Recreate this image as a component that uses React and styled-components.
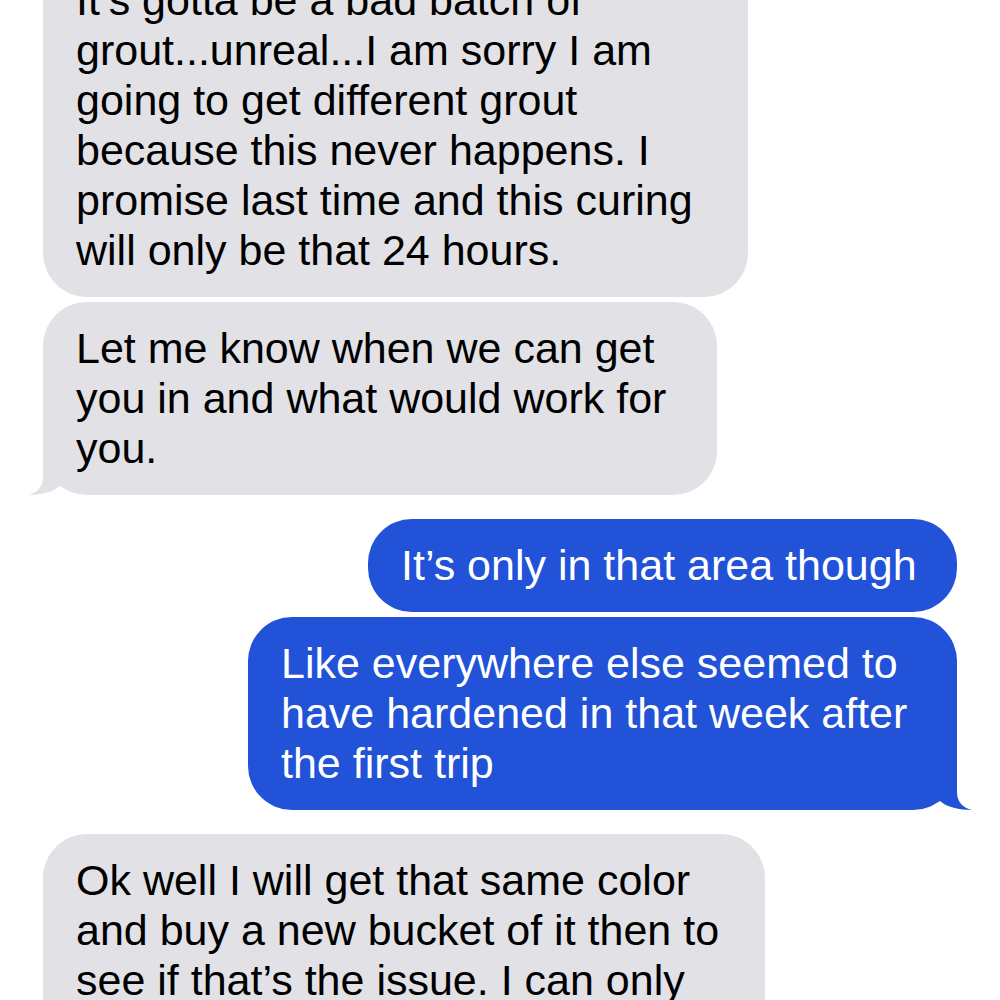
import styled, { createGlobalStyle } from 'styled-components'

const GlobalStyle = createGlobalStyle`
  html, body {
    margin: 0;
    padding: 0;
    background: #ffffff;
    height: 1000px;
    overflow: hidden;
  }
`

const GRAY = '#e1e1e6'
const BLUE = '#2152d8'

const Thread = styled.div`
  display: flex;
  flex-direction: column;
  gap: 24px;
  margin-top: -46px;
  padding: 0 43px;
  font-family: "Liberation Sans", Arial, sans-serif;
`

const Group = styled.div`
  display: flex;
  flex-direction: column;
  align-items: ${p => (p.$mine ? 'flex-end' : 'flex-start')};
  gap: 5px;
`

const Bubble = styled.div`
  position: relative;
  box-sizing: border-box;
  width: ${p => p.$w}px;
  padding: 21px 33px 22px;
  border-radius: 44px;
  background: ${p => (p.$mine ? BLUE : GRAY)};
  color: ${p => (p.$mine ? '#ffffff' : '#000000')};
  font-size: 43px;
  line-height: 50px;
  white-space: nowrap;
`

const TailSvg = styled.svg`
  position: absolute;
  bottom: 0;
  width: 34px;
  height: 44px;
  ${p => (p.$mine ? 'right: -15px;' : 'left: -15px; transform: scaleX(-1);')}
`

function Tail({ mine }) {
  return (
    <TailSvg $mine={mine} viewBox="0 0 34 44">
      <path
        d="M0 0 L19 0 L19 26 C19 36 25 42 34 44 C22 44 8 41 2 35 L0 36 Z"
        fill={mine ? BLUE : GRAY}
      />
    </TailSvg>
  )
}

function Lines({ lines }) {
  return lines.map((l, i) => (
    <span key={i}>
      {l}
      {i < lines.length - 1 && <br />}
    </span>
  ))
}

const messages = [
  {
    mine: false,
    items: [
      {
        w: 705,
        lines: [
          'It’s gotta be a bad batch of',
          'grout...unreal...I am sorry I am',
          'going to get different grout',
          'because this never happens. I',
          'promise last time and this curing',
          'will only be that 24 hours.',
        ],
      },
      {
        w: 674,
        tail: true,
        lines: ['Let me know when we can get', 'you in and what would work for', 'you.'],
      },
    ],
  },
  {
    mine: true,
    items: [
      { w: 589, lines: ['It’s only in that area though'] },
      {
        w: 709,
        tail: true,
        lines: ['Like everywhere else seemed to', 'have hardened in that week after', 'the first trip'],
      },
    ],
  },
  {
    mine: false,
    items: [
      {
        w: 722,
        lines: [
          'Ok well I will get that same color',
          'and buy a new bucket of it then to',
          'see if that’s the issue. I can only',
          'do it this week',
        ],
      },
    ],
  },
]

function App() {
  return (
    <>
      <GlobalStyle />
      <Thread>
        {messages.map((g, gi) => (
          <Group key={gi} $mine={g.mine}>
            {g.items.map((m, mi) => (
              <Bubble key={mi} $mine={g.mine} $w={m.w}>
                <Lines lines={m.lines} />
                {m.tail && <Tail mine={g.mine} />}
              </Bubble>
            ))}
          </Group>
        ))}
      </Thread>
    </>
  )
}

export default App
